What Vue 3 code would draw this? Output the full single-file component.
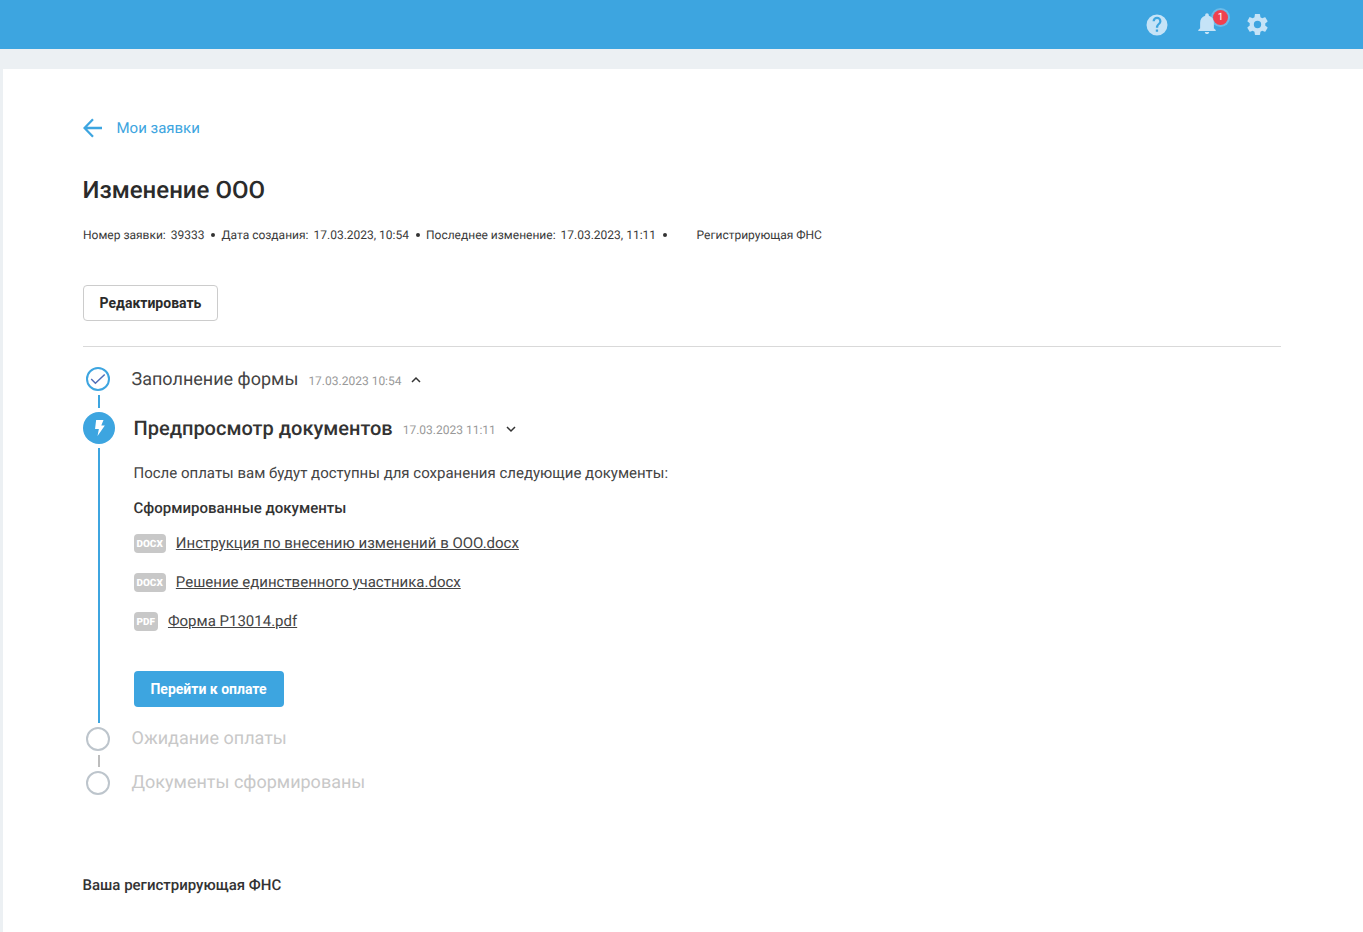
<script setup>
const meta = [
  { label: 'Номер заявки:', value: '39333' },
  { label: 'Дата создания:', value: '17.03.2023, 10:54' },
  { label: 'Последнее изменение:', value: '17.03.2023, 11:11' }
]
const docs = [
  { ext: 'DOCX', name: 'Инструкция по внесению изменений в ООО.docx' },
  { ext: 'DOCX', name: 'Решение единственного участника.docx' },
  { ext: 'PDF', name: 'Форма Р13014.pdf' }
]
</script>

<template>
  <div class="page">
    <header class="topbar">
      <svg class="ico help" viewBox="0 0 24 24"><path d="M12 1.500a10.500 10.500 0 1 0 0 21 10.500 10.500 0 0 0 0-21zm1.100 17.300h-2.300v-2.300h2.300v2.300zm2.400-8.100-1 1.050c-.85.85-1.300 1.500-1.300 3.050h-2.300v-.55c0-1.200.5-2.300 1.300-3.100l1.400-1.450c.45-.4.650-.95.650-1.500a2.200 2.200 0 0 0-4.400 0H7.550a4.450 4.450 0 0 1 8.900 0c0 .95-.4 1.850-.95 2.450z"/></svg>
      <div class="bell-wrap">
        <svg class="ico bell" viewBox="0 0 24 24"><path d="M12 23c1.300 0 2.400-1 2.400-2.300H9.600C9.600 22 10.700 23 12 23zm7.500-6.500v-6c0-3.600-2-6.600-5.500-7.400v-.8a2 2 0 0 0-4 0v.8c-3.500.8-5.500 3.800-5.500 7.400v6L2.500 18.500v1h19v-1l-2-2z"/></svg>
        <span class="badge">1</span>
      </div>
      <svg class="ico gear" viewBox="0 0 24 24"><path d="M20.300 13.200c.05-.4.1-.8.100-1.200s-.05-.8-.1-1.200l2.500-2c.2-.2.300-.5.150-.75l-2.400-4.100c-.15-.25-.45-.35-.7-.25l-3 1.200c-.6-.45-1.300-.85-2-1.150l-.45-3.150A.6.600 0 0 0 13.800 0H9.100c-.3 0-.55.200-.6.500l-.45 3.150c-.7.300-1.400.7-2 1.150l-3-1.200c-.3-.1-.55 0-.7.250L0 7.950c-.15.250-.1.550.15.750l2.500 2c-.05.400-.1.850-.1 1.300s.05.800.1 1.200l-2.500 2c-.2.200-.3.500-.15.750l2.350 4.100c.15.250.45.350.7.250l3-1.200c.6.450 1.300.85 2 1.150l.45 3.150c.05.300.3.500.6.500h4.700c.3 0 .55-.2.600-.5l.45-3.150c.7-.3 1.400-.7 2-1.150l3 1.200c.3.100.55 0 .7-.25l2.400-4.100c.15-.25.050-.55-.15-.75l-2.500-2zM11.500 16.200a4.200 4.200 0 1 1 0-8.400 4.200 4.200 0 0 1 0 8.400z" transform="translate(.5 0)"/></svg>
    </header>

    <main class="card">
      <a class="back">
        <svg class="back-ico" viewBox="0 0 20 20"><path d="M19 10H1.500M10 1.200L1.500 10l8.500 8.800" fill="none" stroke="currentColor" stroke-width="2.300"/></svg>
        <span>Мои заявки</span>
      </a>

      <h1 class="title">Изменение ООО</h1>

      <div class="meta">
        <template v-for="m in meta" :key="m.label">
          <span class="meta-label">{{ m.label }}</span>
          <span class="meta-value">{{ m.value }}</span>
          <i class="dot"></i>
        </template>
        <span class="meta-fns">Регистрирующая ФНС</span>
      </div>

      <button class="edit">Редактировать</button>

      <div class="timeline">
        <section class="step step-done">
          <div class="rail">
            <svg class="mark" viewBox="0 0 24 24"><circle cx="12" cy="12" r="11" fill="none" stroke="#3DA5E0" stroke-width="2"/><path d="M5.200 12l4.200 4.200 9.300-8.700" fill="none" stroke="#4F6DB8" stroke-width="1.500"/></svg>
            <i class="line line-short"></i>
          </div>
          <div class="head">
            <span class="name">Заполнение формы</span>
            <span class="date">17.03.2023 10:54</span>
            <svg class="chev chev-up" viewBox="0 0 12 8"><path d="M2 6L6 2l4 4" fill="none" stroke="#333" stroke-width="1.500"/></svg>
          </div>
        </section>

        <section class="step step-active">
          <div class="rail rail-active">
            <span class="bolt">
              <svg viewBox="0 0 12 18"><path d="M2.200 0h8.300L8 6.200h4L3.800 18l1.500-8H1z" fill="#fff"/></svg>
            </span>
            <i class="line line-long"></i>
          </div>
          <div class="active-body">
            <div class="head head-active">
              <span class="name-active">Предпросмотр документов</span>
              <span class="date date-active">17.03.2023 11:11</span>
              <svg class="chev chev-down" viewBox="0 0 12 8"><path d="M2 2l4 4 4-4" fill="none" stroke="#333" stroke-width="1.500"/></svg>
            </div>
            <p class="intro">После оплаты вам будут доступны для сохранения следующие документы:</p>
            <p class="sub">Сформированные документы</p>
            <ul class="docs">
              <li v-for="d in docs" :key="d.name" class="doc">
                <span class="ext">{{ d.ext }}</span>
                <a class="doc-link">{{ d.name }}</a>
              </li>
            </ul>
            <button class="pay">Перейти к оплате</button>
          </div>
        </section>

        <section class="step step-wait">
          <div class="rail">
            <i class="ring"></i>
            <i class="line line-gray"></i>
          </div>
          <div class="head"><span class="name name-off">Ожидание оплаты</span></div>
        </section>

        <section class="step step-last">
          <div class="rail"><i class="ring"></i></div>
          <div class="head"><span class="name name-off">Документы сформированы</span></div>
        </section>
      </div>

      <h2 class="fns">Ваша регистрирующая ФНС</h2>
    </main>
  </div>
</template>

<style>
html, body { margin: 0; background: #ecf0f3; }
</style>

<style scoped>
.page {
  height: 932px;
  overflow: hidden;
  font-family: Roboto, "Liberation Sans", sans-serif;
  text-rendering: geometricPrecision;
  color: #333;
  background: #ecf0f3;
}
.topbar {
  height: 49px;
  background: #3da5e0;
  display: flex;
  align-items: center;
  justify-content: flex-end;
  padding-right: 95px;
}
.ico { fill: #c5e3f7; display: block; }
.help { width: 24px; height: 24px; margin-right: 26px; }
.bell-wrap { position: relative; width: 24px; height: 24px; margin-right: 28px; }
.bell { width: 22px; height: 22px; margin-left: 1px; }
.badge {
  position: absolute;
  left: 18px;
  top: -3px;
  width: 15px;
  height: 15px;
  border-radius: 50%;
  background: #f0404f;
  box-shadow: 0 0 0 2px rgba(197, 227, 247, .35);
  color: #fff;
  font-size: 10px;
  line-height: 15px;
  text-align: center;
}
.gear { width: 21px; height: 21px; }
.card {
  margin: 20px 0 0 3px;
  background: #fff;
  height: 863px;
  padding: 47px 82px 0 80px;
}
.back {
  display: flex;
  align-items: center;
  height: 24px;
  color: #3da5e0;
  font-size: 15px;
}
.back-ico { width: 20px; height: 20px; margin-right: 13.5px; }
.title {
  margin: 34px 0 0 -.5px;
  font-size: 24px;
  line-height: 32px;
  font-weight: 500;
  color: #2b2b2b;
}
.meta {
  display: flex;
  align-items: center;
  margin-top: 21px;
  height: 16px;
  font-size: 12px;
  color: #3a3a3a;
}
.meta-value { margin-left: 5px; }
.dot {
  width: 4px;
  height: 4px;
  border-radius: 50%;
  background: #333;
  margin: 0 6.5px 0 6.5px;
}
.meta-fns { margin-left: 23.5px; }
.edit {
  display: block;
  margin-top: 42px;
  width: 135px;
  height: 36px;
  padding: 0;
  background: #fff;
  border: 1px solid #ccc;
  border-radius: 4px;
  font: 700 14px Roboto, sans-serif;
  color: #2b2b2b;
}
.timeline {
  margin-top: 25px;
  border-top: 1px solid #d9d9d9;
  padding-top: 20px;
}
.step { display: flex; }
.rail {
  width: 32px;
  flex: none;
  display: flex;
  flex-direction: column;
  align-items: center;
}
.mark { width: 24px; height: 24px; display: block; margin-left: -2px; }
.line { display: block; width: 2px; }
.line-short { height: 13px; margin-top: 4px; background: #3da5e0; }
.line-long { height: 275px; margin-top: 4px; background: #3da5e0; }
.line-gray { height: 12px; margin-top: 4px; background: #bdbdbd; }
.bolt {
  width: 32px;
  height: 32px;
  border-radius: 50%;
  background: #3da5e0;
  display: flex;
  align-items: center;
  justify-content: center;
}
.bolt svg { width: 11px; height: 16px; display: block; }
.step-done { height: 45px; }
.head {
  display: flex;
  align-items: center;
  height: 24px;
  padding-left: 16.5px;
}
.name { font-size: 18px; color: #444; }
.name-off { color: #c8c8c8; margin-top: -2px; }
.date { font-size: 12px; color: #999; margin: 3px 0 0 10px; }
.date-active { margin-top: 4px; }
.chev { width: 12px; height: 8px; margin-left: 9px; }
.chev-up { margin-left: 8.5px; margin-top: 1px; }
.chev-down { margin-top: 2px; }
.active-body { padding-left: 18.5px; flex: 1; }
.head-active { padding-left: 0; height: 32px; }
.name-active { font-size: 20px; font-weight: 500; color: #333; }
.intro { margin: 19px 0 0; font-size: 15px; line-height: 20px; color: #444; }
.sub { margin: 15px 0 0; font-size: 15px; line-height: 20px; font-weight: 500; color: #333; }
.docs { list-style: none; margin: 15px 0 0; padding: 0; }
.doc { display: flex; align-items: center; height: 20px; margin-bottom: 19px; }
.ext {
  background: #c8c8c8;
  color: #fff;
  border-radius: 4px;
  font-size: 10px;
  font-weight: 900;
  height: 19px;
  line-height: 21px;
  padding: 0 3px;
  margin-right: 10px;
}
.doc-link { font-size: 15px; color: #444; text-decoration: underline; }
.pay {
  display: block;
  margin-top: 40px;
  width: 150px;
  height: 36px;
  padding: 0;
  border: 0;
  border-radius: 4px;
  background: #3da5e0;
  color: #fff;
  font: 700 14px Roboto, sans-serif;
}
.step-active { height: 315px; }
.step-wait { height: 44px; }
.ring {
  display: block;
  box-sizing: border-box;
  width: 24px;
  height: 24px;
  margin-left: -2px;
  border-radius: 50%;
  border: 2px solid #bdc5cc;
}
.fns {
  margin: 80px 0 0 -.5px;
  font-size: 15px;
  line-height: 20px;
  font-weight: 500;
  color: #333;
}
</style>
